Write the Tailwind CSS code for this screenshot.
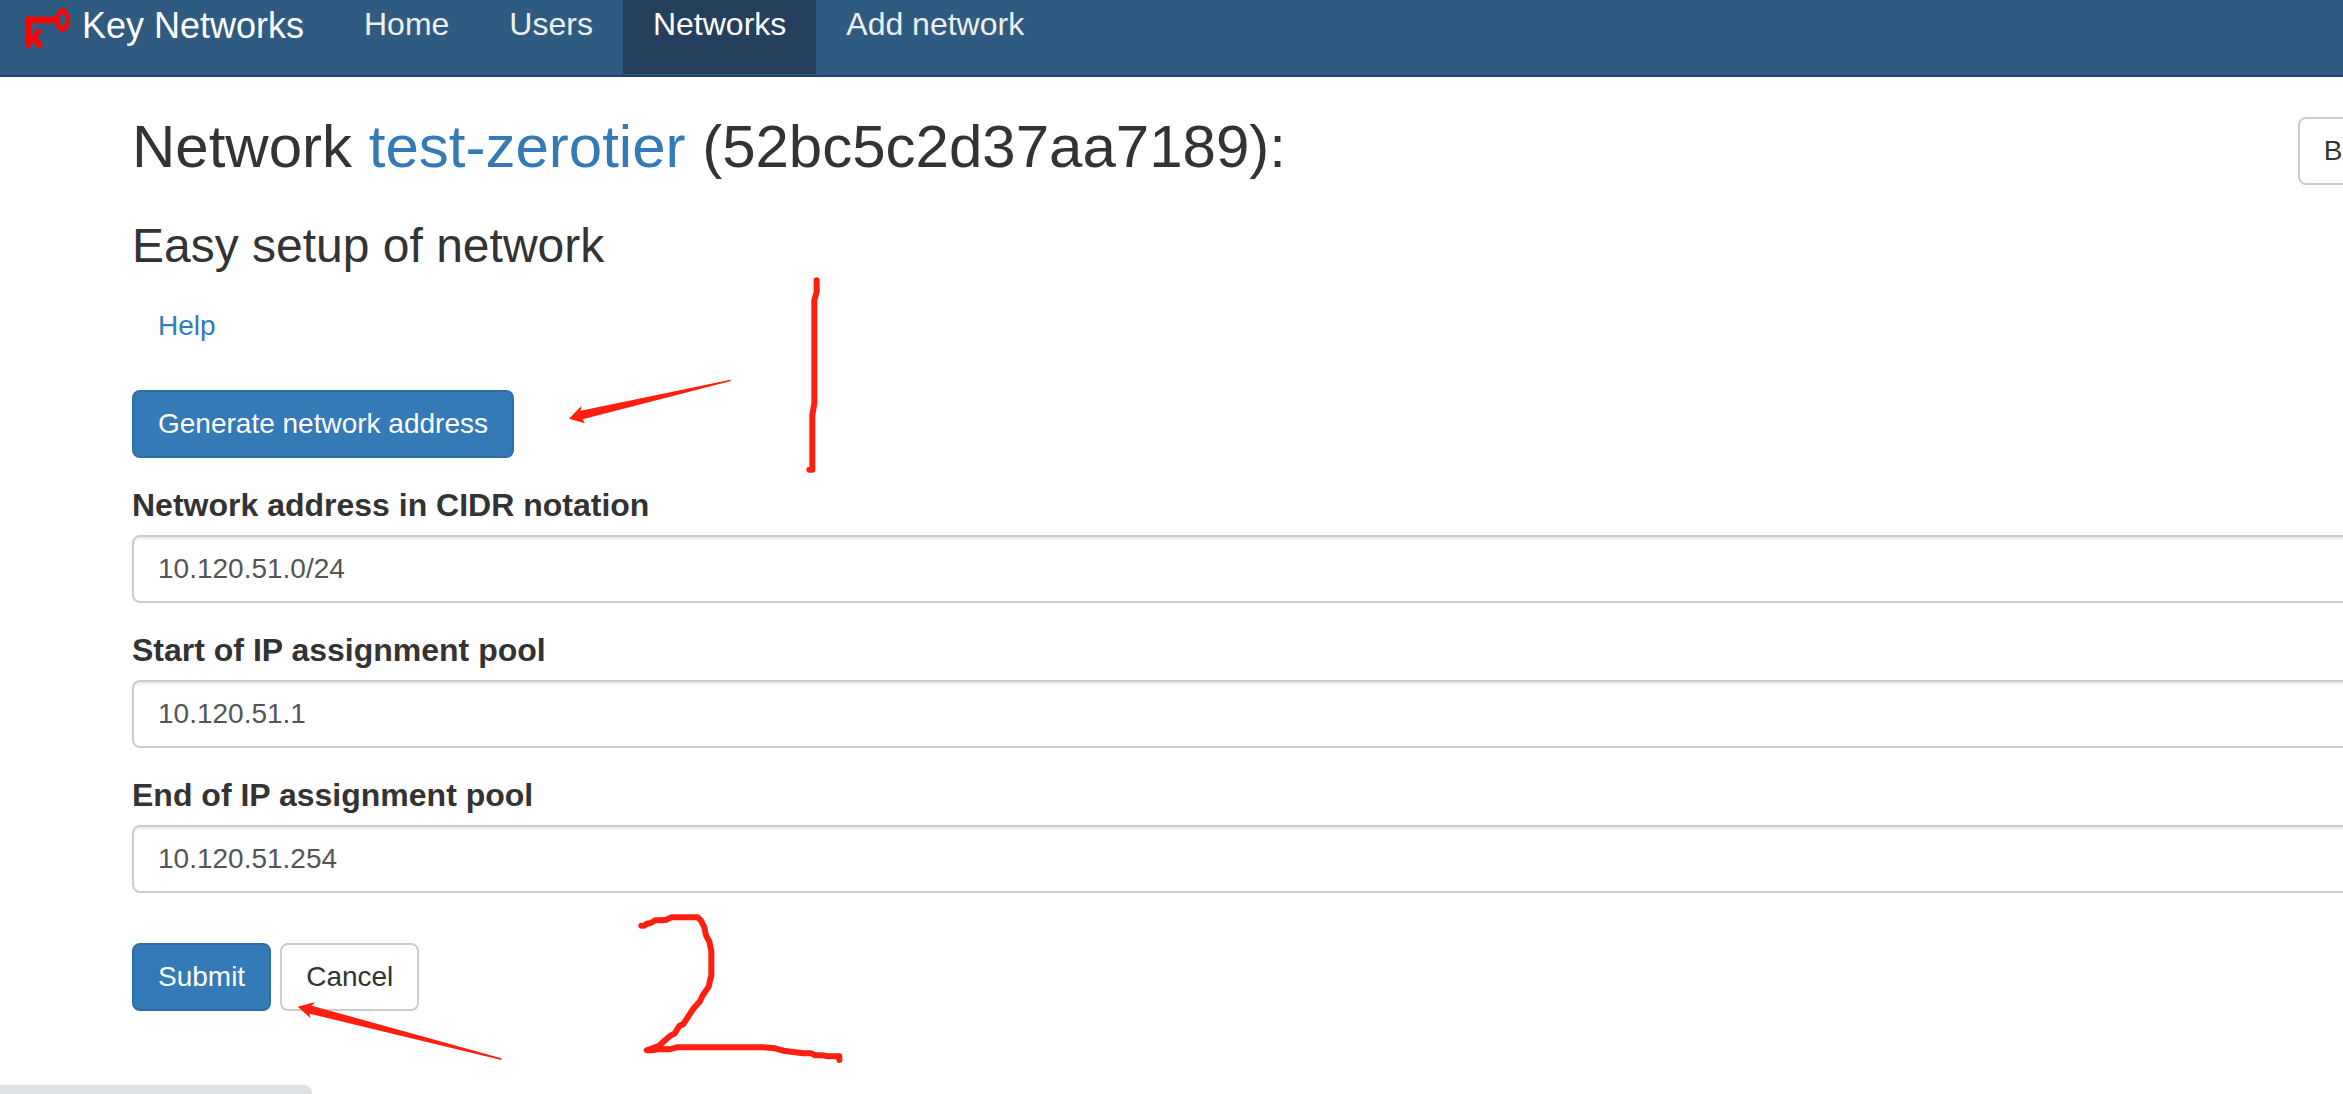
<!DOCTYPE html>
<html lang="en">
<head>
<meta charset="utf-8">
<meta name="viewport" content="width=device-width, initial-scale=1">
<title>Key Networks</title>
<script src="https://cdn.jsdelivr.net/npm/@tailwindcss/browser@4"></script>
</head>
<body class="relative min-h-screen overflow-x-hidden bg-white font-['Liberation_Sans',Arial,sans-serif] text-[28px] leading-10 text-[#333]">
  <nav class="flex items-start border-b-2 border-[#20415f] bg-[#305b81] pb-px text-[32px] text-[#ecf0f1]">
    <a href="#" class="flex w-[334px] shrink-0 items-start pt-1 pl-[25px] text-4xl leading-11 text-white">
      <svg class="mt-1 mr-3 h-10 w-[45px] shrink-0" viewBox="75 23 135 120" aria-hidden="true">
        <path d="M75 49H168V69H94V141H75Z" fill="#f00"/>
        <path fill-rule="evenodd" d="M188 23C200 23 209 38 209 59S200 95 188 95S167 80 167 59S176 23 188 23ZM188 40C182 40 179 48 179 59S182 77 188 77S197 70 197 59S194 40 188 40Z" fill="#f00"/>
        <path d="M93 114L106 91Q111 84 118 86Q126 89 122 98L112 112L127 132Q129 140 124 142Q117 145 113 140L99 124L93 132Z" fill="#f00"/>
      </svg>
      Key Networks
    </a>
    <a href="#" class="px-[30px] pt-1 pb-[30px]">Home</a>
    <a href="#" class="px-[30px] pt-1 pb-[30px]">Users</a>
    <a href="#" class="bg-[#24405c] px-[30px] pt-1 pb-[30px] text-white">Networks</a>
    <a href="#" class="px-[30px] pt-1 pb-[30px]">Add network</a>
  </nav>

  <main class="-mr-[69px] pt-9 pb-20 pl-[132px]">
    <header class="flex items-start justify-between">
      <h1 class="text-6xl leading-[68px]">Network <a href="#" class="text-[#337ab7]">test-zerotier</a> (52bc5c2d37aa7189):</h1>
      <button type="button" class="mt-1 rounded-lg border-2 border-[#ccc] bg-white px-6 py-3">Back</button>
    </header>
    <h2 class="mt-[34px] text-5xl leading-[53px]">Easy setup of network</h2>
    <a href="#" class="mt-5 inline-block border-2 border-transparent px-6 py-3 text-[#337ab7]">Help</a>

    <form class="mt-[30px]">
      <button type="button" class="block rounded-lg border-2 border-[#2e6da4] bg-[#337ab7] px-6 py-3 text-white">Generate network address</button>
      <div class="mt-[27px]">
        <label for="cidr" class="mb-2.5 block text-[32px] font-bold">Network address in CIDR notation</label>
        <input id="cidr" type="text" value="10.120.51.0/24" class="block h-[68px] w-full rounded-lg border-2 border-[#ccc] bg-white px-6 text-[#555] shadow-[inset_0_2px_2px_rgba(0,0,0,0.075)]">
      </div>
      <div class="mt-[27px]">
        <label for="start" class="mb-2.5 block text-[32px] font-bold">Start of IP assignment pool</label>
        <input id="start" type="text" value="10.120.51.1" class="block h-[68px] w-full rounded-lg border-2 border-[#ccc] bg-white px-6 text-[#555] shadow-[inset_0_2px_2px_rgba(0,0,0,0.075)]">
      </div>
      <div class="mt-[27px]">
        <label for="end" class="mb-2.5 block text-[32px] font-bold">End of IP assignment pool</label>
        <input id="end" type="text" value="10.120.51.254" class="block h-[68px] w-full rounded-lg border-2 border-[#ccc] bg-white px-6 text-[#555] shadow-[inset_0_2px_2px_rgba(0,0,0,0.075)]">
      </div>
      <div class="mt-[50px] flex gap-[9px]">
        <button type="submit" class="rounded-lg border-2 border-[#2e6da4] bg-[#337ab7] px-6 py-3 text-white">Submit</button>
        <button type="button" class="rounded-lg border-2 border-[#ccc] bg-white px-6 py-3">Cancel</button>
      </div>
    </form>
  </main>

  <!-- Hand-drawn step markers over the form -->
  <svg class="pointer-events-none absolute top-[360px] left-[550px] h-20 w-[200px]" viewBox="0 0 600 240" fill="#ff1e10" aria-hidden="true">
    <path d="M57 176L94 138L92 152L541 59L543 63L98 178L105 190Z"/>
  </svg>
  <svg class="pointer-events-none absolute top-[260px] left-[780px] h-[230px] w-[70px]" viewBox="0 0 210 690" fill="none" stroke="#ff1e10" stroke-width="18" stroke-linecap="round" stroke-linejoin="round" aria-hidden="true">
    <path d="M110 61V96L103 120V430L97 465V629H88"/>
  </svg>
  <svg class="pointer-events-none absolute top-[890px] left-[620px] h-[190px] w-[250px]" viewBox="0 0 750 570" fill="none" stroke="#ff1e10" stroke-width="18" stroke-linecap="round" stroke-linejoin="round" aria-hidden="true">
    <path d="M64 107H72L82 101L92 99L106 91H126L140 89L154 82H233L243 92L253 112L258 136L268 155L274 183V255L266 290L247 318L240 334L220 356L190 402L178 408L164 430L150 438L116 468L80 481H95L115 478H148L170 472H428L465 475L490 482L550 490H574L586 496H608L625 499H658V510"/>
  </svg>
  <svg class="pointer-events-none absolute top-[920px] left-[110px] h-[174px] w-[420px]" viewBox="0 0 1260 522" fill="#ff1e10" aria-hidden="true">
    <path d="M563 260L615 246L605 257L1174 415L1174 420L598 281L602 295Z"/>
  </svg>

  <div class="fixed bottom-0 left-0 h-[9px] w-[312px] rounded-tr-lg bg-[#dee1e6]"></div>
</body>
</html>
